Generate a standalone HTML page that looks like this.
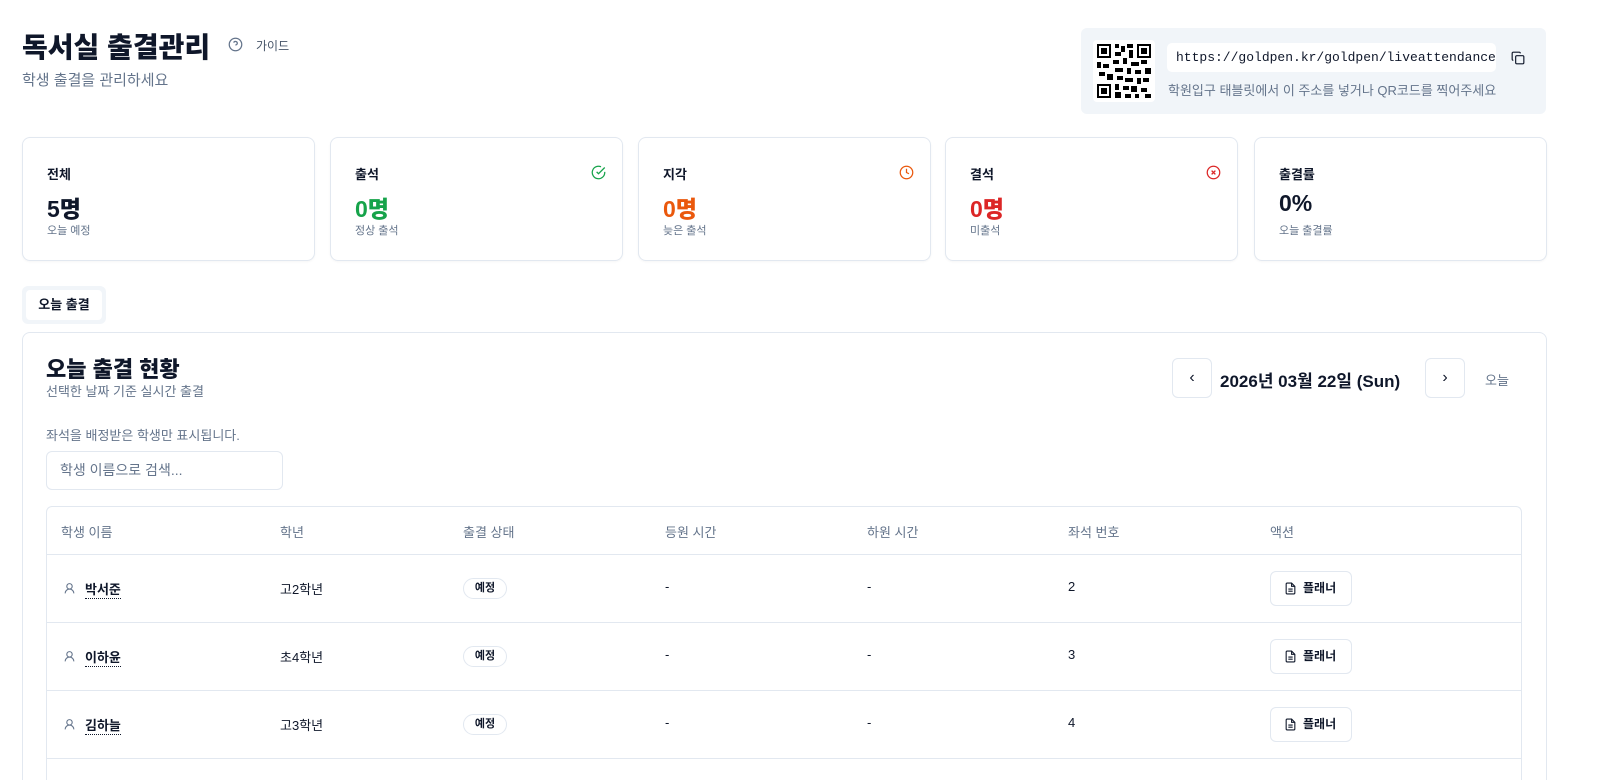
<!DOCTYPE html>
<html><head><meta charset="utf-8"><style>
*{box-sizing:border-box;margin:0;padding:0}
html,body{width:1597px;height:780px;overflow:hidden}
body{background:#fff;font-family:"Liberation Sans","Noto Sans CJK KR",sans-serif;color:#0f172a;position:relative}
.abs{position:absolute}
.card{position:absolute;top:137px;width:293px;height:124px;border:1px solid #e2e8f0;border-radius:8px;box-shadow:0 1px 2px rgba(0,0,0,.04)}
.card .t{position:absolute;left:24px;top:26px;font-size:13px;font-weight:700}
.card .v{position:absolute;left:24px;top:52px;font-size:23px;font-weight:900}
.card .s{position:absolute;left:24px;top:84px;font-size:11px;color:#64748b}
.card svg{position:absolute;right:16px;top:27px}
.th{position:absolute;top:522px;font-size:13px;color:#64748b}
.row{position:absolute;left:47px;width:1474px;height:68px;border-top:1px solid #e2e8f0}
.row div{position:absolute;top:24px;font-size:13px}
.badge{position:absolute;top:23px!important;left:416px;width:44px;height:21px;border:1px solid #e2e8f0;border-radius:11px;font-size:11px!important;font-weight:700;text-align:center;line-height:19px}
.btn{position:absolute;top:16px!important;left:1223px;width:82px;height:35px;border:1px solid #e2e8f0;border-radius:6px;font-size:12px!important;font-weight:700;line-height:33px;padding-left:32px}
</style></head><body>
<div class="abs" style="left:22px;top:26px;font-size:28px;font-weight:900">독서실 출결관리</div>
<svg class="abs" style="left:228px;top:37px" width="15" height="15" viewBox="0 0 24 24" fill="none" stroke="#64748b" stroke-width="2"><circle cx="12" cy="12" r="10"/><path d="M9.1 9a3 3 0 0 1 5.8 1c0 2-3 3-3 3M12 17h.01"/></svg>
<div class="abs" style="left:256px;top:37px;font-size:12px;color:#475569">가이드</div>
<div class="abs" style="left:22px;top:69px;font-size:15px;color:#64748b">학생 출결을 관리하세요</div>

<div class="abs" style="left:1081px;top:28px;width:465px;height:86px;background:#f1f5f9;border-radius:6px"></div>
<div class="abs" style="left:1093px;top:40px;width:62px;height:62px;background:#fff;border-radius:4px"></div>
<svg class="abs" style="left:1097px;top:44px" width="54" height="54" viewBox="0 0 27 27"><g fill="#000"><path d="M0 0h7v7H0zM20 0h7v7h-7zM0 20h7v7H0z"/></g><g fill="#fff"><path d="M1 1h5v5H1zM21 1h5v5h-5zM1 21h5v5H1z"/></g><g fill="#000"><path d="M2 2h3v3H2zM22 2h3v3h-3zM2 22h3v3H2zM9 0h2v2H9zM12 1h2v3h-2zM15 0h3v2h-3zM9 4h3v2H9zM16 3h2v4h-2zM8 8h3v2H8zM13 7h2v3h-2zM17 9h4v2h-4zM22 8h3v2h-3zM0 9h2v3H0zM3 10h3v2H3zM9 12h4v2H9zM15 12h2v3h-2zM19 13h3v2h-3zM24 12h3v3h-3zM1 14h3v2H1zM5 15h3v3H5zM10 16h3v2h-3zM14 17h4v2h-4zM20 17h2v3h-2zM23 17h3v2h-3zM9 20h2v3H9zM13 21h3v2h-3zM17 21h3v3h-3zM22 22h3v2h-3zM9 24h3v3H9zM14 25h3v2h-3zM19 25h2v2h-2zM24 25h3v2h-3z"/></g></svg>
<div class="abs" style="left:1167px;top:43px;width:329px;height:29px;background:#fff;border-radius:5px;font-family:'Liberation Mono',monospace;font-size:13px;line-height:29px;padding-left:9px">https://goldpen.kr/goldpen/liveattendance</div>
<svg class="abs" style="left:1511px;top:51px" width="14" height="14" viewBox="0 0 24 24" fill="none" stroke="#0f172a" stroke-width="2"><rect x="8" y="8" width="14" height="14" rx="2"/><path d="M4 16c-1.1 0-2-.9-2-2V4c0-1.1.9-2 2-2h10c1.1 0 2 .9 2 2"/></svg>
<div class="abs" style="left:1168px;top:80px;font-size:13px;color:#64748b">학원입구 태블릿에서 이 주소를 넣거나 QR코드를 찍어주세요</div>

<div class="card" style="left:22px"><div class="t">전체</div><div class="v">5명</div><div class="s">오늘 예정</div></div>
<div class="card" style="left:330px"><div class="t">출석</div><div class="v" style="color:#16a34a">0명</div><div class="s">정상 출석</div><svg width="15" height="15" viewBox="0 0 24 24" fill="none" stroke="#16a34a" stroke-width="2"><path d="M22 11v1a10 10 0 1 1-6-9.2"/><path d="M9 11l3 3L22 4"/></svg></div>
<div class="card" style="left:638px"><div class="t">지각</div><div class="v" style="color:#ea580c">0명</div><div class="s">늦은 출석</div><svg width="15" height="15" viewBox="0 0 24 24" fill="none" stroke="#ea580c" stroke-width="2"><circle cx="12" cy="12" r="10"/><path d="M12 6v6l4 2"/></svg></div>
<div class="card" style="left:945px"><div class="t">결석</div><div class="v" style="color:#dc2626">0명</div><div class="s">미출석</div><svg width="15" height="15" viewBox="0 0 24 24" fill="none" stroke="#dc2626" stroke-width="2"><circle cx="12" cy="12" r="10"/><path d="M15 9l-6 6M9 9l6 6"/></svg></div>
<div class="card" style="left:1254px"><div class="t">출결률</div><div class="v">0%</div><div class="s">오늘 출결률</div></div>

<div class="abs" style="left:22px;top:286px;width:84px;height:38px;background:#f1f5f9;border-radius:6px;padding:4px"><div style="background:#fff;border-radius:4px;height:30px;font-size:13px;font-weight:700;text-align:center;line-height:30px">오늘 출결</div></div>

<div class="abs" style="left:22px;top:332px;width:1525px;height:448px;border:1px solid #e2e8f0;border-bottom:none;border-radius:8px 8px 0 0"></div>
<div class="abs" style="left:46px;top:352px;font-size:22px;font-weight:900">오늘 출결 현황</div>
<div class="abs" style="left:46px;top:381px;font-size:13px;color:#64748b">선택한 날짜 기준 실시간 출결</div>
<div class="abs" style="left:1172px;top:358px;width:40px;height:40px;border:1px solid #e2e8f0;border-radius:6px;text-align:center;line-height:38px;font-size:16px">‹</div>
<div class="abs" style="left:1220px;top:367px;font-size:17px;font-weight:700">2026년 03월 22일 (Sun)</div>
<div class="abs" style="left:1425px;top:358px;width:40px;height:40px;border:1px solid #e2e8f0;border-radius:6px;text-align:center;line-height:38px;font-size:16px">›</div>
<div class="abs" style="left:1485px;top:370px;font-size:13px;color:#64748b">오늘</div>
<div class="abs" style="left:46px;top:425px;font-size:13px;color:#64748b">좌석을 배정받은 학생만 표시됩니다.</div>
<div class="abs" style="left:46px;top:451px;width:237px;height:39px;border:1px solid #e2e8f0;border-radius:6px;font-size:14px;color:#64748b;line-height:37px;padding-left:13px">학생 이름으로 검색...</div>

<div class="abs" style="left:46px;top:506px;width:1476px;height:274px;border:1px solid #e2e8f0;border-bottom:none;border-radius:6px 6px 0 0"></div>
<div class="th" style="left:61px">학생 이름</div><div class="th" style="left:280px">학년</div><div class="th" style="left:463px">출결 상태</div><div class="th" style="left:665px">등원 시간</div><div class="th" style="left:867px">하원 시간</div><div class="th" style="left:1068px">좌석 번호</div><div class="th" style="left:1270px">액션</div>

<div class="row" style="top:554px"><svg style="position:absolute;left:16px;top:27px" width="13" height="13" viewBox="0 0 24 24" fill="none" stroke="#64748b" stroke-width="2"><circle cx="12" cy="8" r="5"/><path d="M20 21a8 8 0 0 0-16 0"/></svg><div style="left:38px;font-weight:700;border-bottom:1px dotted #0f172a">박서준</div><div style="left:233px">고2학년</div><div class="badge">예정</div><div style="left:618px">-</div><div style="left:820px">-</div><div style="left:1021px">2</div><div class="btn">플래너<svg style="position:absolute;left:13px;top:10px" width="13" height="13" viewBox="0 0 24 24" fill="none" stroke="#0f172a" stroke-width="2"><path d="M14 2H6a2 2 0 0 0-2 2v16a2 2 0 0 0 2 2h12a2 2 0 0 0 2-2V8z"/><path d="M14 2v6h6M8 13h8M8 17h8"/></svg></div></div>
<div class="row" style="top:622px"><svg style="position:absolute;left:16px;top:27px" width="13" height="13" viewBox="0 0 24 24" fill="none" stroke="#64748b" stroke-width="2"><circle cx="12" cy="8" r="5"/><path d="M20 21a8 8 0 0 0-16 0"/></svg><div style="left:38px;font-weight:700;border-bottom:1px dotted #0f172a">이하윤</div><div style="left:233px">초4학년</div><div class="badge">예정</div><div style="left:618px">-</div><div style="left:820px">-</div><div style="left:1021px">3</div><div class="btn">플래너<svg style="position:absolute;left:13px;top:10px" width="13" height="13" viewBox="0 0 24 24" fill="none" stroke="#0f172a" stroke-width="2"><path d="M14 2H6a2 2 0 0 0-2 2v16a2 2 0 0 0 2 2h12a2 2 0 0 0 2-2V8z"/><path d="M14 2v6h6M8 13h8M8 17h8"/></svg></div></div>
<div class="row" style="top:690px"><svg style="position:absolute;left:16px;top:27px" width="13" height="13" viewBox="0 0 24 24" fill="none" stroke="#64748b" stroke-width="2"><circle cx="12" cy="8" r="5"/><path d="M20 21a8 8 0 0 0-16 0"/></svg><div style="left:38px;font-weight:700;border-bottom:1px dotted #0f172a">김하늘</div><div style="left:233px">고3학년</div><div class="badge">예정</div><div style="left:618px">-</div><div style="left:820px">-</div><div style="left:1021px">4</div><div class="btn">플래너<svg style="position:absolute;left:13px;top:10px" width="13" height="13" viewBox="0 0 24 24" fill="none" stroke="#0f172a" stroke-width="2"><path d="M14 2H6a2 2 0 0 0-2 2v16a2 2 0 0 0 2 2h12a2 2 0 0 0 2-2V8z"/><path d="M14 2v6h6M8 13h8M8 17h8"/></svg></div></div>
<div class="row" style="top:758px;height:22px"></div>
</body></html>
